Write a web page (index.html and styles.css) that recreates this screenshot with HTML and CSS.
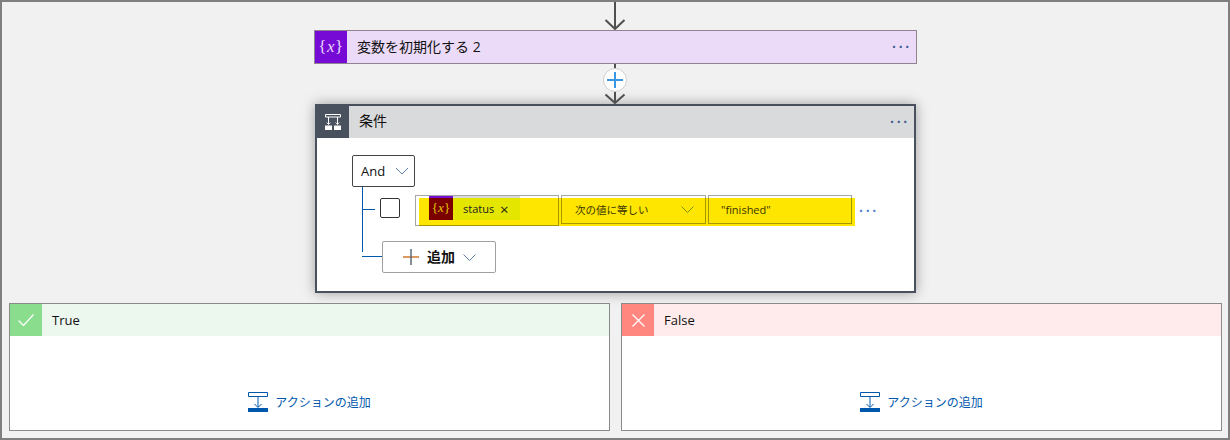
FILE: index.html
```html
<!DOCTYPE html>
<html>
<head>
    <title>条件</title>
    <link rel="stylesheet" href="styles.css">
</head>
<body>
    <div class="frame">
        <svg class="conn" width="24" height="28" viewBox="0 0 24 28">
            <path d="M12 0V27M2.500 18L12 27L21.500 18" fill="none" stroke="#505050" stroke-width="2"/>
        </svg>

        <div class="action">
            <div class="action-icon"><span class="var-icon">{<i>x</i>}</span></div>
            <div class="action-title">変数を初期化する 2</div>
            <div class="dots">···</div>
        </div>

        <div class="conn-mid">
            <svg class="conn" width="24" height="40" viewBox="0 0 24 40">
                <path d="M12 0V39M2.500 30.500L12 39L21.500 30.500" fill="none" stroke="#505050" stroke-width="2"/>
            </svg>
            <div class="plus">
                <svg width="16" height="16" viewBox="0 0 16 16">
                    <path d="M0 8H16M8 0V16" stroke="#3b97e3" stroke-width="2"/>
                </svg>
            </div>
        </div>

        <div class="condition">
            <div class="cond-head">
                <div class="cond-icon">
                    <svg width="16" height="16" viewBox="0 0 16 16">
                        <path d="M.5 .5H15.500V3H.5Z" fill="none" stroke="#fff" stroke-width="1"/>
                        <path d="M3.500 3V10.500M12.500 3V10.500" stroke="#fff" stroke-width="1"/>
                        <path d="M1.500 8.500L3.500 10.500L5.500 8.500M10.500 8.500L12.500 10.500L14.500 8.500" fill="none" stroke="#d8d8d8" stroke-width="1"/>
                        <path d="M0 11.500H7V16H0ZM9 11.500H16V16H9Z" fill="#fff"/>
                    </svg>
                </div>
                <div class="cond-title">条件</div>
                <div class="dots">···</div>
            </div>
            <div class="cond-body">
                <div class="and-btn">
                    <span>And</span>
                    <svg width="14" height="8" viewBox="0 0 14 8"><path d="M1 1L7 7L13 1" fill="none" stroke="#5b7fa6" stroke-width="1"/></svg>
                </div>
                <div class="tree">
                    <div class="rule">
                        <div class="check"></div>
                        <div class="fields">
                            <div class="highlight"></div>
                            <div class="field field-token">
                                <div class="token">
                                    <div class="token-icon">{<i>x</i>}</div>
                                    <div class="token-label">status <span class="token-x">×</span></div>
                                </div>
                            </div>
                            <div class="field field-op">
                                <span>次の値に等しい</span>
                                <svg width="13" height="7" viewBox="0 0 13 7"><path d="M.5 .5L6.500 6.500L12.500 .5" fill="none" stroke="#7f8f10" stroke-width="1"/></svg>
                            </div>
                            <div class="field field-val">"finished"</div>
                        </div>
                        <div class="dots rule-dots">···</div>
                    </div>
                    <div class="add-row">
                        <div class="add-btn">
                            <svg width="16" height="16" viewBox="0 0 16 16"><path d="M0 8H16" stroke="#d0792c" stroke-width="1.500"/><path d="M8 0V16" stroke="#5d6b7a" stroke-width="1.500"/></svg>
                            <b>追加</b>
                            <svg width="13" height="7" viewBox="0 0 13 7"><path d="M.5 .5L6.500 6.500L12.500 .5" fill="none" stroke="#5b7fa6" stroke-width="1"/></svg>
                        </div>
                    </div>
                </div>
            </div>
        </div>

        <div class="branches">
            <div class="branch branch-true">
                <div class="branch-head">
                    <div class="branch-icon">
                        <svg width="16" height="12" viewBox="0 0 16 12"><path d="M.5 6.500L5.500 11.500L15.500 .5" fill="none" stroke="#fff" stroke-width="1.200"/></svg>
                    </div>
                    <div class="branch-title">True</div>
                </div>
                <div class="branch-body">
                    <div class="add-action">
                        <svg width="20" height="20" viewBox="0 0 20 20">
                            <path d="M.5 .5H19.500V4.500H.5ZM10 5V15M6.500 12L10 15.500L13.500 12" fill="none" stroke="#0058ad" stroke-width="1"/>
                            <path d="M0 16H20V20H0Z" fill="#0058ad"/>
                        </svg>
                        <span>アクションの追加</span>
                    </div>
                </div>
            </div>
            <div class="branch branch-false">
                <div class="branch-head">
                    <div class="branch-icon">
                        <svg width="13" height="13" viewBox="0 0 13 13"><path d="M.5 .5L12.500 12.500M12.500 .5L.5 12.500" fill="none" stroke="#fff" stroke-width="1.200"/></svg>
                    </div>
                    <div class="branch-title">False</div>
                </div>
                <div class="branch-body">
                    <div class="add-action">
                        <svg width="20" height="20" viewBox="0 0 20 20">
                            <path d="M.5 .5H19.500V4.500H.5ZM10 5V15M6.500 12L10 15.500L13.500 12" fill="none" stroke="#0058ad" stroke-width="1"/>
                            <path d="M0 16H20V20H0Z" fill="#0058ad"/>
                        </svg>
                        <span>アクションの追加</span>
                    </div>
                </div>
            </div>
        </div>
    </div>
</body>
</html>
```

FILE: styles.css
```css
* {
    box-sizing: border-box;
}
body {
    margin: 0;
    font-family: "Open Sans", "Noto Sans CJK JP", sans-serif;
    font-size: 13px;
    color: #111;
    background-color: #f1f1f1;
}
svg {
    display: block;
    flex: none;
}
.frame {
    width: 1230px;
    height: 440px;
    border: 2px solid #7f7f7f;
    background-color: #f1f1f1;
    display: flex;
    flex-direction: column;
    align-items: center;
    overflow: hidden;
}
.action {
    width: 603px;
    height: 34px;
    margin-left: 1px;
    border: 1px solid #8f8490;
    background-color: #ecdbf8;
    display: flex;
    align-items: center;
}
.action-icon {
    width: 32px;
    height: 32px;
    background-color: #770bd6;
    color: #fff;
    display: flex;
    align-items: center;
    justify-content: center;
}
.var-icon {
    font-family: "Liberation Serif", serif;
    font-size: 17px;
    letter-spacing: .5px;
    color: #e9d8fb;
}
.action-title {
    flex: 1;
    margin-left: 10px;
    font-size: 14px;
    line-height: 18px;
}
.dots {
    width: 24px;
    margin-right: 2px;
    font-family: "Liberation Sans", sans-serif;
    font-size: 14px;
    font-weight: bold;
    line-height: 14px;
    letter-spacing: 2px;
    text-align: center;
    color: #3f5f94;
}

/* connector between the cards */
.conn-mid {
    width: 24px;
    height: 40px;
    position: relative;
    z-index: 2;
}
.plus {
    position: absolute;
    left: 0;
    top: 4px;
    width: 24px;
    height: 24px;
    border-radius: 50%;
    background-color: #fff;
    border: 1px solid #d0d0d0;
    display: flex;
    align-items: center;
    justify-content: center;
}

.condition {
    width: 601px;
    height: 189px;
    margin-left: 1px;
    border: 2px solid #4a515e;
    background-color: #fff;
    box-shadow: 0 0 12px rgba(0, 0, 0, .35);
}
.cond-head {
    height: 32px;
    background-color: #d9dadc;
    display: flex;
    align-items: center;
}
.cond-icon {
    width: 32px;
    height: 32px;
    background-color: #4a515e;
    display: flex;
    align-items: center;
    justify-content: center;
}
.cond-title {
    flex: 1;
    margin-left: 10px;
    font-size: 14px;
    line-height: 18px;
    margin-top: -2px;
}
.cond-body {
    padding: 17px 0 0 35px;
}
.and-btn {
    width: 63px;
    height: 32px;
    border: 1px solid #444;
    border-radius: 2px;
    display: flex;
    align-items: center;
    justify-content: space-between;
    padding: 0 5px 0 8px;
}
.tree {
    margin-left: 10px;
    padding-top: 8px;
    position: relative;
}
.tree::before {
    content: "";
    position: absolute;
    left: 0;
    top: 0;
    width: 1px;
    height: 65px;
    background-color: #0058ad;
}
.rule {
    display: flex;
    position: relative;
    height: 31px;
}
.rule::before {
    content: "";
    position: absolute;
    left: 0;
    top: 14px;
    width: 13px;
    height: 1px;
    background-color: #0058ad;
}
.check {
    width: 20px;
    height: 20px;
    margin: 3px 0 0 18px;
    border: 1px solid #333;
    border-radius: 2px;
    background-color: #fff;
}
.fields {
    margin-left: 15px;
    display: flex;
    gap: 2px;
    position: relative;
    height: 31px;
}
.highlight {
    position: absolute;
    left: 4px;
    top: 3px;
    width: 436px;
    height: 28px;
    background-color: #ffe600;
}
.field {
    position: relative;
    border: 1px solid rgba(0, 0, 0, .35);
    font-size: 11px;
    color: #3a3500;
    height: 29px;
    display: flex;
    align-items: center;
    padding-bottom: 1px;
}
.field-token {
    width: 144px;
    height: 31px;
    align-items: flex-start;
    padding: 0 0 0 13px;
}
.token {
    display: flex;
    height: 24px;
}
.token-icon {
    width: 24px;
    height: 24px;
    background-color: #7a0000;
    border-top: 2px solid #770bd6;
    color: #e4c900;
    font-family: "Liberation Serif", serif;
    font-size: 13px;
    text-align: center;
    line-height: 20px;
}
.token-label {
    width: 67px;
    height: 24px;
    padding-left: 10px;
    font-size: 11px;
    line-height: 26px;
    color: #222;
    background: linear-gradient(#d9d9d9 2px, #e4e600 2px);
}
.token-x {
    font-size: 15px;
    line-height: 15px;
    margin-left: 3px;
    position: relative;
    top: 2px;
}
.field-op {
    width: 145px;
    padding: 0 11px 1px 13px;
    justify-content: space-between;
    font-size: 10.500px;
}
.field-val {
    width: 144px;
    padding-left: 12px;
}
.rule-dots {
    margin: 9px 0 0 5px;
    color: #4a7fd0;
}
.add-row {
    position: relative;
    padding: 15px 0 0 20px;
}
.add-row::before {
    content: "";
    position: absolute;
    left: 0;
    top: 30px;
    width: 20px;
    height: 1px;
    background-color: #0058ad;
}
.add-btn {
    width: 114px;
    height: 32px;
    border: 1px solid #a0a0a0;
    border-radius: 2px;
    background-color: #fff;
    display: flex;
    align-items: center;
    padding: 0 0 2px 20px;
    gap: 8px;
}
.add-btn svg {
    margin-top: 2px;
}
.add-btn b {
    font-size: 14px;
}

/* true / false branches */
.branches {
    display: flex;
    gap: 11px;
    margin-top: 10px;
    margin-left: 1px;
}
.branch {
    width: 601px;
    height: 128px;
    border: 1px solid #8a8a8a;
    background-color: #fff;
    display: flex;
    flex-direction: column;
}
.branch-head {
    height: 32px;
    display: flex;
    align-items: center;
}
.branch-icon {
    width: 32px;
    height: 32px;
    display: flex;
    align-items: center;
    justify-content: center;
}
.branch-title {
    margin-left: 10px;
}
.branch-true .branch-head {
    background-color: #ecf7ee;
}
.branch-true .branch-icon {
    background-color: #89dd8d;
}
.branch-false .branch-head {
    background-color: #ffebeb;
}
.branch-false .branch-icon {
    background-color: #ff8780;
}
.branch-body {
    flex: 1;
    display: flex;
    justify-content: center;
    padding-top: 56px;
}
.add-action {
    display: flex;
    align-items: center;
    gap: 7px;
    height: 20px;
    font-size: 12px;
    color: #0058ad;
}
```
